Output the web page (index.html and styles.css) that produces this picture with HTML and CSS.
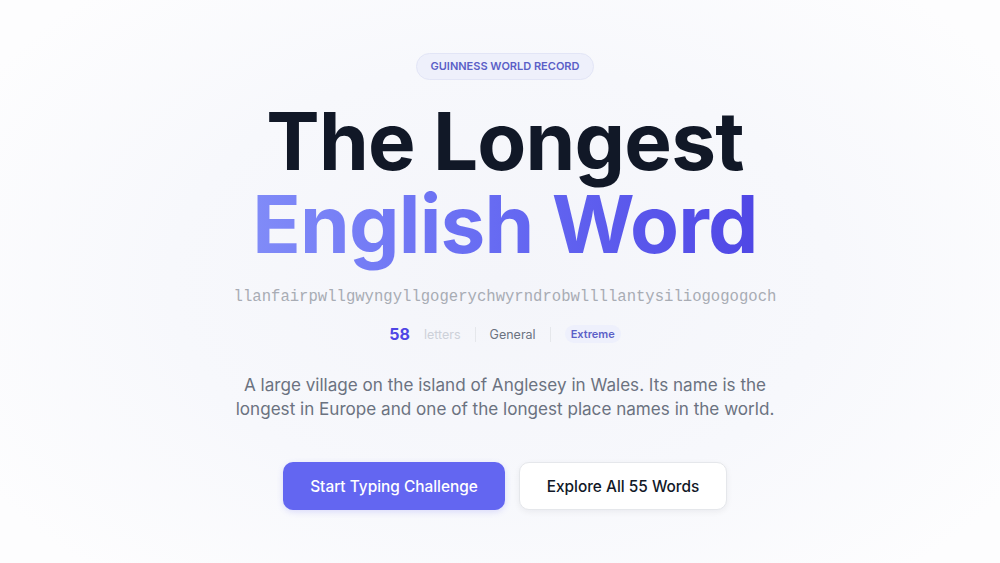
FILE: index.html
```html
<!DOCTYPE html>
<html lang="en">
<head>
<meta charset="utf-8">
<title>The Longest English Word</title>
<link rel="stylesheet" href="styles.css">
</head>
<body>
<main class="hero">
  <span class="badge">GUINNESS WORLD RECORD</span>
  <h1 class="title">
    <span class="line-dark">The Longest</span>
    <span class="line-grad">English Word</span>
  </h1>
  <p class="word">llanfairpwllgwyngyllgogerychwyrndrobwllllantysiliogogogoch</p>
  <div class="stats">
    <span class="count">58</span>
    <span class="unit">letters</span>
    <span class="sep"></span>
    <span class="cat">General</span>
    <span class="sep"></span>
    <span class="level">Extreme</span>
  </div>
  <p class="desc">A large village on the island of Anglesey in Wales. Its name is the longest in Europe and one of the longest place names in the world.</p>
  <div class="actions">
    <button class="btn btn-primary">Start Typing Challenge</button>
    <button class="btn btn-secondary">Explore All 55 Words</button>
  </div>
</main>
</body>
</html>
```
FILE: styles.css
```css
html, body {
  margin: 0;
  padding: 0;
  height: 100%;
}
body {
  font-family: Inter, "Noto Sans", sans-serif;
  background: radial-gradient(ellipse 60% 70% at 50% 50%, #f4f5fa 0%, #f7f8fc 55%, #fdfdfe 100%);
  color: #111827;
  overflow: hidden;
}
.hero {
  display: flex;
  flex-direction: column;
  align-items: center;
  padding-top: 54px;
  padding-left: 10px;
  text-align: center;
}
.badge {
  display: inline-block;
  padding: 5px 14px;
  font-size: 11px;
  line-height: 15px;
  font-weight: 600;
  letter-spacing: 0;
  color: #5b5fc7;
  background: #eef0fb;
  border: 1px solid #e2e5f6;
  border-radius: 999px;
  margin-top: -1px;
}
.title {
  margin: 19px 0 0;
  font-size: 80px;
  line-height: 83px;
  font-weight: 700;
  letter-spacing: -0.01em;
  display: flex;
  flex-direction: column;
  align-items: center;
}
.line-dark {
  color: #111827;
}
.line-grad {
  background: linear-gradient(90deg, #818cf8 0%, #6366f1 55%, #4f46e5 100%);
  -webkit-background-clip: text;
  background-clip: text;
  color: transparent;
  padding: 0 4px 14px;
  margin-bottom: -14px;
}
.word {
  margin: 20px 0 0;
  font-family: "Liberation Mono", "DejaVu Sans Mono", monospace;
  font-size: 15.6px;
  line-height: 24px;
  color: #a8acb4;
}
.stats {
  margin-top: 13px;
  display: flex;
  align-items: center;
  height: 24px;
  font-size: 12.5px;
}
.count {
  font-size: 16px;
  font-weight: 700;
  color: #4f46e5;
}
.unit {
  margin-left: 14px;
  color: #cdd1d9;
}
.sep {
  width: 1px;
  height: 15px;
  background: #e5e7eb;
  margin: 0 14px;
}
.cat {
  color: #6b7280;
}
.level {
  font-size: 11px;
  font-weight: 600;
  color: #5b5fc7;
  background: #eef0fc;
  padding: 2px 6px;
  border-radius: 999px;
}
.desc {
  margin: 27px 0 0;
  max-width: 560px;
  font-size: 17.1px;
  line-height: 24px;
  color: #6b7280;
}
.actions {
  margin-top: 41px;
  display: flex;
  gap: 14px;
}
.btn {
  font-family: Inter, "Noto Sans", sans-serif;
  font-size: 15.4px;
  font-weight: 500;
  height: 48px;
  border-radius: 10px;
  cursor: pointer;
}
.btn-primary {
  width: 222px;
  background: #6366f1;
  color: #ffffff;
  border: none;
  box-shadow: 0 2px 6px rgba(99, 102, 241, 0.2);
}
.btn-secondary {
  width: 208px;
  background: #ffffff;
  color: #111827;
  border: 1px solid #e5e7eb;
  box-shadow: 0 2px 6px rgba(17, 24, 39, 0.06);
}
```
